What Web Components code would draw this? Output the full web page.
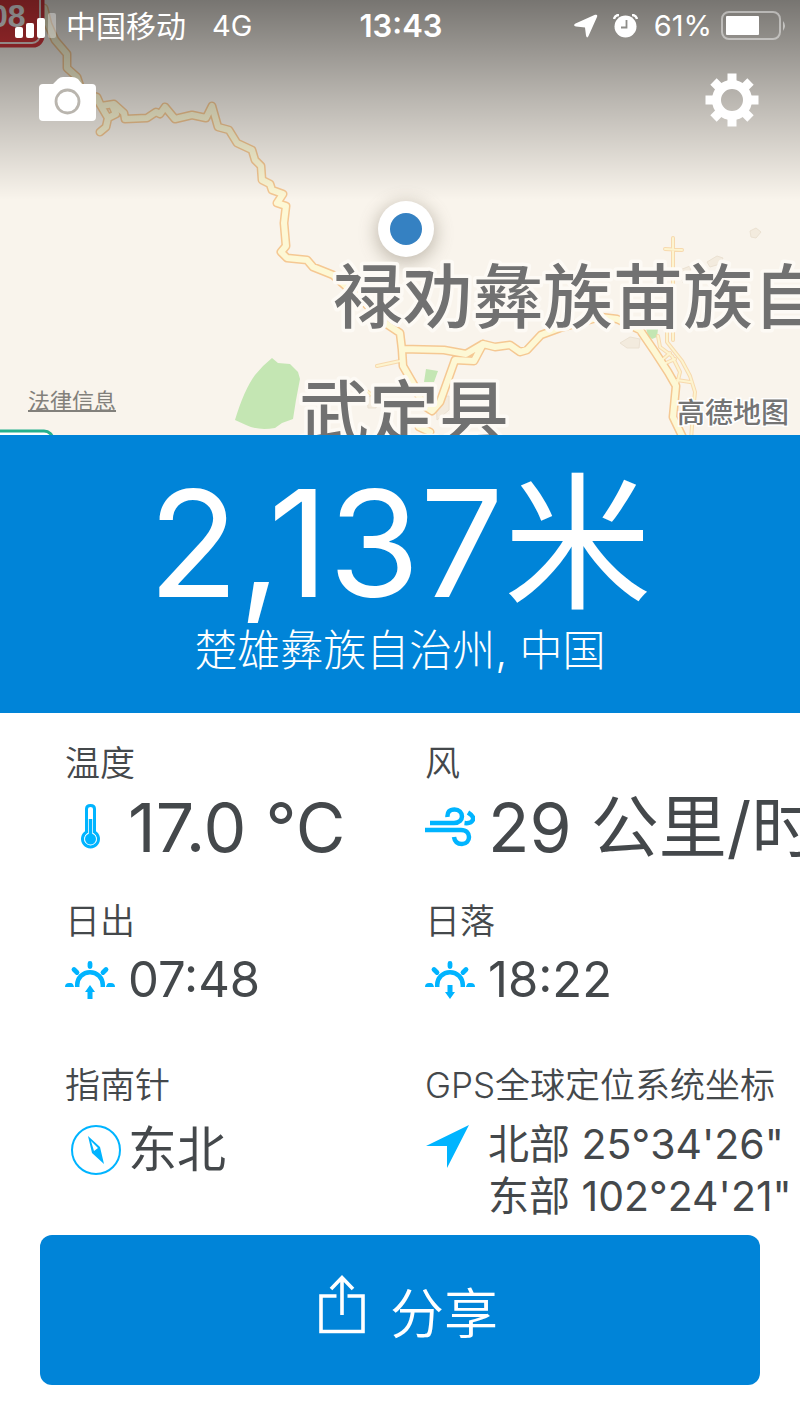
<!DOCTYPE html>
<html lang="zh-CN">
<head>
<meta charset="utf-8">
<meta name="viewport" content="width=device-width, initial-scale=1">
<title>海拔</title>
<style>
    body{
        margin: 0;
        background: #fff;
        color: #44484b;
        font-family: Inter, "Noto Sans CJK SC", sans-serif;
        overflow-x: hidden;
    }
</style>
</head>
<body>
<altimeter-app></altimeter-app>

<script>
class StatusBar extends HTMLElement{
    constructor(){
        super();
        this.attachShadow({ mode: "open" });
    }
    connectedCallback(){
        this.shadowRoot.innerHTML = `
        <style>
        :host{
            display: grid;
            grid-template-columns: 1fr auto 1fr;
            align-items: center;
            height: 52px;
            padding: 0 13px 0 15px;
            color: #fff;
            font-size: 30px;
            line-height: 52px;
        }
        .side{ display: flex; align-items: center; }
        .end{ justify-content: flex-end; }
        .net{ margin-left: 26px; font-size: 29px; }
        .signal{ margin-right: 10px; }
        .time{ font-size: 31px; font-weight: 600; }
        .arrow{ margin-right: 15px; }
        .alarm{ margin-right: 16px; }
        .charge{ font-size: 29px; }
        .battery{ margin-left: 9px; }
        svg{ display: block; flex: none; }
        </style>
        <div class="side">
            <svg class="signal" width="41" height="26" viewBox="0 0 41 26" fill="#fff">
                <rect x="0" y="14" width="8" height="11" rx="2"/>
                <rect x="11" y="10" width="8" height="15" rx="2"/>
                <rect x="22" y="5" width="8" height="20" rx="2"/>
                <rect x="33" y="0" width="8" height="25" rx="2" opacity=".35"/>
            </svg>
            <span>${this.getAttribute("carrier")}</span>
            <span class="net">${this.getAttribute("network")}</span>
        </div>
        <span class="time">${this.getAttribute("time")}</span>
        <div class="side end">
            <svg class="arrow" width="24" height="24" viewBox="0 0 24 24" fill="#fff">
                <path d="M21 .8Q24 0 23 3L14.500 22Q13 25 12 21.500L11 13.500 2 12.500Q-1.500 11.500 1.500 9.500Z"/>
            </svg>
            <svg class="alarm" width="25" height="24" viewBox="0 0 25 24">
                <circle cx="12.500" cy="12.500" r="11" fill="#fff"/>
                <path d="M13.500 6v7.500H8" fill="none" stroke="#8e8d89" stroke-width="1.800"/>
                <path d="M1 5Q2 1 6 1M19 1Q23 1 24 5" fill="none" stroke="#fff" stroke-width="2.500"/>
            </svg>
            <span class="charge">${this.getAttribute("charge")}</span>
            <svg class="battery" width="66" height="30" viewBox="0 0 66 30">
                <rect x="1" y="1" width="58" height="27" rx="7" fill="none" stroke="#fff" stroke-opacity=".45" stroke-width="2"/>
                <rect x="5" y="5" width="33" height="19" rx="1" fill="#fff"/>
                <path d="M62 10Q66 14.500 62 20Z" fill="#fff" opacity=".5"/>
            </svg>
        </div>
        `;
    }
}
window.customElements.define("status-bar", StatusBar);

class AreaMap extends HTMLElement{
    constructor(){
        super();
        this.attachShadow({ mode: "open" });
    }
    connectedCallback(){
        this.shadowRoot.innerHTML = `
        <style>
        :host{
            display: block;
            position: relative;
            height: 435px;
            overflow: hidden;
            background: #f9f4ec;
        }
        .canvas{
            position: absolute;
            inset: 0;
            width: 100%;
            height: 100%;
        }
        .place{
            font: 500 70px "Noto Sans CJK SC", sans-serif;
            fill: #717171;
            stroke: #fdfaf5;
            stroke-width: 7px;
            stroke-linejoin: round;
            paint-order: stroke;
        }
        .brand{
            font: 500 28px "Noto Sans CJK SC", sans-serif;
            fill: #747474;
            stroke: #fff;
            stroke-width: 3px;
            paint-order: stroke;
        }
        .shield{ font: 700 32px "Liberation Sans", sans-serif; fill: #fff; }
        .major{ fill: none; stroke-linejoin: round; stroke-linecap: round; }
        .shade{
            position: absolute;
            inset: 0 0 auto;
            height: 200px;
            background: linear-gradient(rgba(0,0,0,.52), rgba(0,0,0,.25) 50%, rgba(0,0,0,.04) 92%, rgba(0,0,0,0));
        }
        .over{ position: relative; }
        .tools{
            display: flex;
            justify-content: space-between;
            padding: 20px 40px 20px 38px;
        }
        button{ border: 0; padding: 0; background: none; cursor: pointer; }
        button svg{ display: block; }
        a{
            position: absolute;
            left: 28px;
            bottom: 18px;
            color: #82807b;
            font-size: 22px;
            line-height: 32px;
            text-decoration: underline;
            text-decoration-thickness: 2px;
            text-decoration-skip-ink: none;
            text-underline-offset: 1px;
        }
        </style>
        <svg class="canvas" viewBox="0 0 800 435" preserveAspectRatio="xMidYMid slice">
            <defs>
                <path id="main" d="M44 8 48 24 55 40 67 54 67 68 77 77 82 92 97 97 101 106 114 104 124 113 125 119 147 118 156 112 160 114 165 107 175 119 192 115 206 118 212 106 218 127 229 130 237 143 252 150 255 160 261 166 262 180 270 184 272 190 283 194 277 203 286 206 284 223 286 246 281 252 287 258 307 260 313 267 333 275 363 301 385 323 400 333 402 350 403 366 414 385 423 405 432 411 440 402 455 360 474 361 483 344 466 354 444 350 402 349M483 344 495 347 510 345 520 352 527 350 541 335 560 328 600 317 617 319 640 330 655 352 668 372 676 386 673 417 684 440M98 101 108 118 106 127 100 132M108 118 116 114 112 105M419 427 430 432"/>
                <path id="minor" d="M673 238V340M665 249 682 250M377 366 400 361M667 330 667 342 682 361 690 376 695 392 693 412 691 440M658 336 660 347 672 356 680 372 677 384M677 380 690 382M662 360 670 353M666 363 675 359M356 383 372 395"/>
                <filter id="soft" x="-50%" y="-50%" width="200%" height="200%"><feGaussianBlur stdDeviation="9"/></filter>
            </defs>
            <path fill="#c4e6b3" d="M235 420Q244 390 255 375 262 366 272 358L278 363 290 364 298 372 300 379 296 400 293 419 282 423 275 428Q258 431 246 425ZM426 369 438 371 434 382 424 382ZM646 328 658 329 657 337 652 339 648 336ZM661 292 668 291 667 299Z"/>
            <path fill="#f3ebde" stroke="#ebe1d2" d="M750 231 756 228 761 232 756 238 751 237ZM707 262 717 256 723 258 720 264 710 267ZM620 343 630 337 640 339 639 348 627 348ZM680 270 690 266 691 275 683 283ZM436 397 449 396 449 410 437 420ZM367 396 378 398 376 408 368 408Z"/>
            <use href="#minor" class="major" stroke="#f7d9ae" stroke-width="4"/>
            <use href="#main" class="major" stroke="#f5c893" stroke-width="9"/>
            <use href="#minor" class="major" stroke="#fdf4cf" stroke-width="2"/>
            <use href="#main" class="major" stroke="#fdf8d5" stroke-width="6"/>
            <g fill="none">
                <rect x="-40" y="-20" width="83" height="66" rx="10" fill="#e33b3f" stroke="#d93a40" stroke-width="3"/>
                <rect x="-40" y="-20" width="80" height="63" rx="8" stroke="#f5e5e2" stroke-width="2"/>
                <rect x="-40" y="431" width="93" height="40" rx="9" fill="#fff" stroke="#25b08d" stroke-width="3"/>
            </g>
            <text class="shield" x="-10" y="27">08</text>
            <circle cx="406" cy="233" r="30" fill="#6f6654" opacity=".4" filter="url(#soft)"/>
            <circle cx="406" cy="229" r="28" fill="#fff"/>
            <circle cx="406" cy="229" r="16" fill="#3581c2"/>
            <text class="place" x="333" y="323">禄劝彝族苗族自</text>
            <text class="place" x="299" y="439">武定县</text>
            <text class="brand" x="677" y="423">高德地图</text>
        </svg>
        <div class="shade"></div>
        <div class="over">
            <slot></slot>
            <div class="tools">
                <button type="button" aria-label="相机">
                    <svg width="59" height="56" viewBox="0 0 59 56">
                        <path fill="#fff" d="M5 12H15L20 7Q22 5 25 5H34Q37 5 40 7L44 12H54Q58 12 58 16V45Q58 49 54 49H5Q1 49 1 45V16Q1 12 5 12Z"/>
                        <circle cx="29.500" cy="29.500" r="11.500" fill="none" stroke="#b9b5ae" stroke-width="2.800"/>
                    </svg>
                </button>
                <button type="button" aria-label="设置">
                    <svg width="56" height="56" viewBox="-28 -28 56 56">
                        <circle r="15.500" fill="none" stroke="#fff" stroke-width="9"/>
                        <path stroke="#fff" stroke-width="9" d="M0-17V-26.500M0 17V26.500M-17 0H-26.500M17 0H26.500M12.500-12.500 18.500-18.500M12.500 12.500 18.500 18.500M-12.500 12.500-18.500 18.500M-12.500-12.500-18.500-18.500"/>
                    </svg>
                </button>
            </div>
        </div>
        <a href="#legal">法律信息</a>
        `;
    }
}
window.customElements.define("area-map", AreaMap);

class AltitudePanel extends HTMLElement{
    constructor(){
        super();
        this.attachShadow({ mode: "open" });
    }
    connectedCallback(){
        this.shadowRoot.innerHTML = `
        <style>
        :host{
            display: block;
            padding: 29px 20px 37px;
            background: #0084d8;
            color: #fff;
            text-align: center;
            white-space: nowrap;
        }
        ::slotted(span){ display: block; }
        h1, p{ margin: 0; font-weight: 400; }
        h1{ font-size: 148px; line-height: 160px; font-optical-sizing: none; }
        p{ font-size: 43px; line-height: 52px; font-weight: 300; }
        </style>
        <h1><slot name="altitude"></slot></h1>
        <p><slot name="place"></slot></p>
        `;
    }
}
window.customElements.define("altitude-panel", AltitudePanel);

class MetricItem extends HTMLElement{
    constructor(){
        super();
        this.attachShadow({ mode: "open" });
    }
    connectedCallback(){
        this.shadowRoot.innerHTML = `
        <style>
        :host{ display: block; white-space: nowrap; padding-bottom: 46px; }
        h2{
            margin: 0;
            font-size: 35px;
            line-height: 48px;
            font-weight: 350;
        }
        .row{
            display: flex;
            align-items: center;
            font-size: 49px;
            line-height: 70px;
        }
        .icon{ flex: none; width: 63px; }
        ::slotted(svg){ display: block; }
        :host([size="large"]){ padding-bottom: 30px; }
        :host([size="large"]) .row{ font-size: 68px; line-height: 80px; }
        :host([size="tall"]){ padding-bottom: 0; }
        :host([size="tall"]) .row{ line-height: 82px; }
        :host([size="lines"]){ padding-bottom: 13px; }
        :host([size="lines"]) .row{
            align-items: flex-start;
            padding-top: 9px;
            font-size: 41px;
            line-height: 52px;
        }
        </style>
        <h2>${this.getAttribute("label")}</h2>
        <div class="row">
            <div class="icon"><slot name="icon"></slot></div>
            <div><slot></slot></div>
        </div>
        `;
    }
}
window.customElements.define("metric-item", MetricItem);

class ShareButton extends HTMLElement{
    constructor(){
        super();
        this.attachShadow({ mode: "open" });
    }
    connectedCallback(){
        this.shadowRoot.innerHTML = `
        <style>
        :host{ display: block; padding: 0 40px 35px; }
        button{
            display: flex;
            justify-content: center;
            align-items: center;
            gap: 24px;
            width: 100%;
            height: 150px;
            border: 0;
            border-radius: 12px;
            padding: 0 0 0 16px;
            background: #0084d8;
            color: #fff;
            font: inherit;
            font-size: 54px;
            font-weight: 350;
            cursor: pointer;
        }
        svg{ margin-bottom: 12px; }
        </style>
        <button type="button">
            <svg width="48" height="60" viewBox="0 0 48 60" fill="none" stroke="#fff" stroke-width="3.600">
                <path d="M18.500 22H3V57.500H45V22H29.500M24 41V4M13 15 24 3.500 35 15"/>
            </svg>
            <slot></slot>
        </button>
        `;
    }
}
window.customElements.define("share-button", ShareButton);

class AltimeterApp extends HTMLElement{
    constructor(){
        super();
        this.attachShadow({ mode: "open" });
    }
    // sunrise and sunset share everything but the arrow
    sun(arrow){
        return `
        <svg slot="icon" width="50" height="40" viewBox="0 0 50 40" fill="none" stroke="#00b4ff" stroke-width="4.800">
            <path d="M12.200 27V25A12.800 12.800 0 0 1 37.800 25V27" stroke-width="4.500"/>
            <path d="M25 3.500V6.500M9 9.500 12 12.500M41 9.500 38 12.500" stroke-linecap="round"/>
            <path d="M0 27Q0 23 4 23H6Q8 23 9 27ZM41 27Q42 23 44 23H46Q50 23 50 27Z" fill="#00b4ff" stroke="none"/>
            <path d="${arrow}" fill="#00b4ff" stroke="none"/>
        </svg>`;
    }
    connectedCallback(){
        this.shadowRoot.innerHTML = `
        <style>
        :host{ display: block; overflow: hidden; }
        .metrics{
            display: grid;
            grid-template-columns: repeat(2, minmax(0, 1fr));
            padding: 26px 15px 0 65px;
        }
        </style>
        <area-map>
            <status-bar carrier="中国移动" network="4G" time="13:43" charge="61%"></status-bar>
        </area-map>
        <altitude-panel>
            <span slot="altitude">2,137米</span>
            <span slot="place">楚雄彝族自治州, 中国</span>
        </altitude-panel>
        <main class="metrics">
            <metric-item label="温度" size="large">
                <svg slot="icon" width="50" height="50" viewBox="0 0 50 50" fill="none" stroke="#00b4ff">
                    <path d="M21.500 30V7Q21.500 3.500 25.500 3.500T29.500 7V30A8 8 0 1 1 21.500 30Z" stroke-width="3"/>
                    <path d="M25.500 17V34" stroke-width="3.500"/>
                    <circle cx="25.500" cy="37" r="5.500" fill="#00b4ff" stroke="none"/>
                </svg>
                17.0 °C
            </metric-item>
            <metric-item label="风" size="large">
                <svg slot="icon" width="50" height="50" viewBox="0 0 50 50" fill="none" stroke="#00b4ff" stroke-width="4.500">
                    <path d="M5 21H29C40 21 39 7.500 29.500 7.500Q22 7.500 22.500 15M0 28H36C47 28 46 42 37 42Q30 42 29 35M39.500 21C48 22 52 16 43 10.500"/>
                </svg>
                29 公里/时
            </metric-item>
            <metric-item label="日出">
                ${this.sun("M25 25 30 32H27.500V39H22.500V32H20Z")}
                07:48
            </metric-item>
            <metric-item label="日落">
                ${this.sun("M25 39 30 32H27.500V25H22.500V32H20Z")}
                18:22
            </metric-item>
            <metric-item label="指南针" size="tall">
                <svg slot="icon" width="60" height="52" viewBox="0 0 60 52">
                    <circle cx="31" cy="26" r="24" fill="none" stroke="#00b4ff" stroke-width="2"/>
                    <path fill="#00b4ff" fill-rule="evenodd" d="M23 12 35 23 39 40 27 29ZM26 17 29 27 33 24Z"/>
                </svg>
                东北
            </metric-item>
            <metric-item label="GPS全球定位系统坐标" size="lines">
                <svg slot="icon" width="50" height="52" viewBox="0 0 50 52">
                    <path fill="#00b4ff" d="M44 7 22 50V28H1Z"/>
                </svg>
                北部 25°34'26"<br>东部 102°24'21"
            </metric-item>
        </main>
        <share-button>分享</share-button>
        `;
    }
}
window.customElements.define("altimeter-app", AltimeterApp);
</script>
</body>
</html>
